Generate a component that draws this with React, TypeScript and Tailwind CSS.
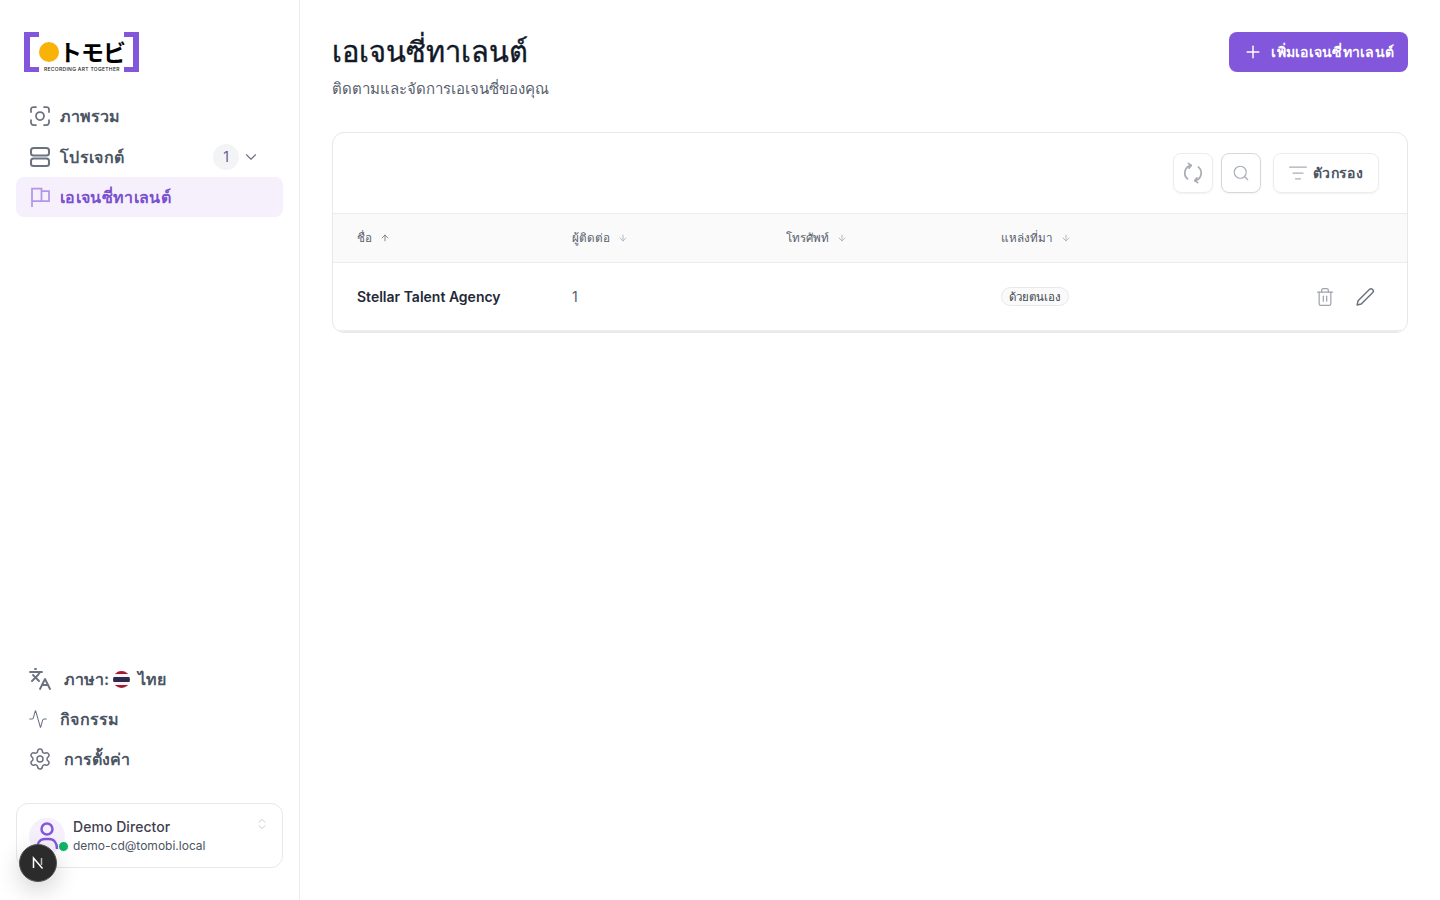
import React from 'react';
import { ArrowDown, ArrowUp, ChevronDown, ChevronsUpDown, Activity, Languages, ListFilter, Plus, Search, Settings, Trash2 } from 'lucide-react';

const NavIcon: React.FC<{ children: React.ReactNode }> = ({ children }) => (
  <span className="w-[24px] h-[24px] flex items-center justify-center text-[#6b7280]">{children}</span>
);

const Logo = () => (
  <div className="relative w-[115px] h-[40px] ml-[8px]">
    <div className="absolute left-0 top-0 w-[15px] h-[40px] border-y-[5px] border-l-[6px] border-[#8257dc]" />
    <div className="absolute right-0 top-0 w-[15px] h-[40px] border-y-[5px] border-r-[6px] border-[#8257dc]" />
    <div className="absolute left-[15px] top-[10px] w-[20px] h-[20px] rounded-full bg-[#f9b208]" />
    <span className="absolute left-[35px] top-[8px] text-[23px] leading-[23px] font-bold text-black tracking-[-1px] font-['Noto_Sans_CJK_JP',sans-serif]">トモビ</span>
    <span className="absolute left-[19px] top-[34px] px-[1px] bg-white text-[5px] leading-[6px] font-medium text-[#222] whitespace-nowrap tracking-[0.3px]">RECORDING ART TOGETHER</span>
  </div>
);

const Sidebar = () => (
  <aside className="w-[300px] h-[900px] shrink-0 border-r border-[#ececec] flex flex-col px-[16px] pt-[32px] pb-[32px]">
    <Logo />
    <nav className="mt-[24px] flex flex-col">
      <div className="h-[40px] flex items-center gap-[8px] px-[12px] text-[#4b5563] font-semibold text-[16px]">
        <NavIcon>
          <svg width="24" height="24" viewBox="0 0 24 24" fill="none" stroke="currentColor" strokeWidth="1.75" strokeLinecap="round">
            <circle cx="12" cy="12" r="4" />
            <path d="M3 8V5.500A2.500 2.500 0 0 1 5.500 3H8" />
            <path d="M16 3h2.500A2.500 2.500 0 0 1 21 5.500V8" />
            <path d="M21 16v2.500a2.500 2.500 0 0 1-2.500 2.500H16" />
            <path d="M8 21H5.500A2.500 2.500 0 0 1 3 18.500V16" />
          </svg>
        </NavIcon>
        <span>ภาพรวม</span>
      </div>
      <div className="h-[41px] flex items-center gap-[8px] px-[12px] text-[#4b5563] font-semibold text-[16px]">
        <NavIcon>
          <svg width="22" height="22" viewBox="0 0 22 22" fill="none" stroke="currentColor" strokeWidth="2">
            <rect x="2" y="2" width="18" height="7.5" rx="2.5" />
            <rect x="2" y="12.5" width="18" height="7.5" rx="2.5" />
          </svg>
        </NavIcon>
        <span className="tracking-[0.35px]">โปรเจกต์</span>
        <span className="ml-auto w-[26px] h-[26px] rounded-full bg-[#f3f4f6] flex items-center justify-center text-[14px] font-normal text-[#6b5b95]">1</span>
        <ChevronDown size={18} strokeWidth={1.5} className="ml-[-5px] mr-[11px] text-[#6b7280]" />
      </div>
      <div className="h-[40px] flex items-center gap-[8px] px-[12px] rounded-[8px] bg-[#f5f0fc] text-[#7a4fd0] font-semibold text-[16px]">
        <NavIcon>
          <svg width="22" height="22" viewBox="0 0 22 22" fill="none" stroke="#b394ea" strokeWidth="1.75">
            <path d="M3 21V2.500h9.500v12.500H3" />
            <path d="M12.500 5h7.500v10h-7.500" />
          </svg>
        </NavIcon>
        <span className="tracking-[0.35px]">เอเจนซี่ทาเลนต์</span>
      </div>
    </nav>
    <div className="mt-auto flex flex-col">
      <div className="h-[40px] flex items-center gap-[12px] px-[12px] text-[#4b5563] font-semibold text-[16px]">
        <NavIcon><Languages size={24} strokeWidth={1.9} /></NavIcon>
        <span className="flex items-center gap-[4px]">
          ภาษา:
          <span className="w-[17px] h-[17px] rounded-full overflow-hidden flex flex-col shrink-0">
            <span className="h-[3px] bg-[#a51931]" />
            <span className="h-[3px] bg-[#f4f5f8]" />
            <span className="h-[5px] bg-[#2d2a4a]" />
            <span className="h-[3px] bg-[#f4f5f8]" />
            <span className="h-[3px] bg-[#a51931]" />
          </span>
          <span className="ml-[4px]">ไทย</span>
        </span>
      </div>
      <div className="h-[40px] flex items-center gap-[8px] px-[12px] text-[#4b5563] font-semibold text-[16px]">
        <NavIcon><Activity size={20} strokeWidth={1.25} className="-translate-x-[2px]" /></NavIcon>
        <span className="tracking-[0.3px]">กิจกรรม</span>
      </div>
      <div className="h-[40px] flex items-center gap-[12px] px-[12px] text-[#4b5563] font-semibold text-[16px]">
        <NavIcon><Settings size={24} strokeWidth={1.5} /></NavIcon>
        <span>การตั้งค่า</span>
      </div>
    </div>
    <div className="relative mt-[24px] h-[65px] rounded-[12px] border border-[#e8e8e8] flex items-start pl-[12px] pt-[14px]">
      <div className="relative w-[36px] h-[36px] rounded-full bg-[#f5f0fc] flex items-center justify-center text-[#8257dc] shrink-0">
        <svg width="28" height="28" viewBox="0 0 28 28" fill="none" stroke="currentColor" strokeWidth="2.5">
          <circle cx="14" cy="7" r="5.5" />
          <path d="M4 27c0-6 3-10 8-10h4c5 0 8 4 8 10" />
        </svg>
        <span className="absolute right-[-4px] bottom-[2px] w-[11px] h-[11px] rounded-full bg-[#10b368] border border-white" />
      </div>
      <div className="ml-[8px] mt-[-1px]">
        <div className="text-[14px] leading-[20px] font-medium text-[#3f3f50] tracking-[0.05px]">Demo Director</div>
        <div className="text-[12px] leading-[18px] text-[#4b5563]">demo-cd@tomobi.local</div>
      </div>
      <ChevronsUpDown size={14} strokeWidth={1} className="absolute right-[13px] top-[13px] text-[#9ca3af]" />
      <div className="absolute left-[2px] top-[40px] w-[38px] h-[38px] rounded-full bg-[#2b2b2b] border border-[#555] shadow-[0_8px_24px_rgba(0,0,0,0.18)] flex items-center justify-center">
        <svg width="16" height="16" viewBox="0 0 16 16" fill="none">
          <path d="M3.500 13V3l9 10.500" stroke="white" strokeWidth="1.500" />
          <path d="M11.500 3v7" stroke="#bbb" strokeWidth="1.500" />
        </svg>
      </div>
    </div>
  </aside>
);

const HeaderCell: React.FC<{ label: string; up?: boolean; className: string }> = ({ label, up, className }) => (
  <div className={`flex items-center gap-[8px] pt-[1px] text-[11.7px] text-[#57606d] ${className}`}>
    <span>{label}</span>
    {up ? <ArrowUp size={10} className="text-[#6b7280]" /> : <ArrowDown size={10} className="text-[#a8adb5]" />}
  </div>
);

export default function App() {
  return (
    <div className="w-[1440px] h-[900px] flex bg-white overflow-hidden font-['Inter','Noto_Sans',sans-serif]">
      <Sidebar />
      <main className="flex-1 px-[32px] pt-[32px]">
        <div className="flex items-start justify-between">
          <div>
            <h1 className="text-[29px] leading-[40px] font-medium text-[#111827] [-webkit-text-stroke:0.4px_#111827]">เอเจนซี่ทาเลนต์</h1>
            <p className="mt-[5px] text-[15px] leading-[24px] text-[#57606d]">ติดตามและจัดการเอเจนซี่ของคุณ</p>
          </div>
          <button className="h-[40px] pl-[14px] pr-[14px] pb-[1px] rounded-[8px] bg-[#8257dc] text-white text-[14px] font-semibold tracking-[0.25px] flex items-center gap-[8px]">
            <Plus size={20} strokeWidth={1.75} />
            เพิ่มเอเจนซี่ทาเลนต์
          </button>
        </div>
        <section className="mt-[31px] rounded-[12px] border border-[#e8e8e8] overflow-hidden">
          <div className="h-[80px] flex items-center justify-end gap-[8px] pr-[28px]">
            <button className="w-[40px] h-[40px] rounded-[8px] border border-[#ececec] shadow-xs flex items-center justify-center text-[#a8adb5]">
              <svg width="22" height="22" viewBox="0 0 24 24" fill="none" stroke="currentColor" strokeWidth="1.9" strokeLinecap="round" strokeLinejoin="round">
                <path d="M10 3.700A8.500 8.500 0 0 0 6 18.500" />
                <path d="M7 1.500l3 2.200-2.300 3" />
                <path d="M14 20.300A8.500 8.500 0 0 0 18 5.500" />
                <path d="M17 22.500l-3-2.200 2.300-3" />
              </svg>
            </button>
            <button className="w-[40px] h-[40px] rounded-[8px] border border-[#d5d7da] shadow-xs flex items-center justify-center text-[#a8adb5]">
              <Search size={18} strokeWidth={1.5} />
            </button>
            <button className="ml-[4px] h-[40px] pl-[14px] pr-[15px] rounded-[8px] border border-[#ececec] shadow-xs flex items-center gap-[5px] text-[14px] font-semibold tracking-[0.35px] text-[#4b5563]">
              <ListFilter size={20} strokeWidth={1.5} className="text-[#a8adb5]" />
              <span className="pb-[1px]">ตัวกรอง</span>
            </button>
          </div>
          <div className="h-[50px] flex items-center bg-[#fafafa] border-y border-[#ececec] px-[24px]">
            <HeaderCell label="ชื่อ" up className="w-[215px]" />
            <HeaderCell label="ผู้ติดต่อ" className="w-[214px]" />
            <HeaderCell label="โทรศัพท์" className="w-[215px]" />
            <HeaderCell label="แหล่งที่มา" className="w-[215px]" />
          </div>
          <div className="h-[69px] flex items-center border-b-2 border-[#ececec] pl-[24px] pr-[32px]">
            <div className="w-[215px] text-[14px] font-semibold text-[#1f2937]">Stellar Talent Agency</div>
            <div className="w-[214px] text-[14px] text-[#57606d]">1</div>
            <div className="w-[215px]" />
            <div className="flex-1 flex items-center">
              <span className="flex items-center h-[19px] px-[7px] pt-[1px] rounded-full border border-[#e8e8e8] bg-[#fafafa] text-[11.5px] leading-[17px] text-[#414651]">ด้วยตนเอง</span>
            </div>
            <div className="flex items-center gap-[20px]">
              <Trash2 size={20} strokeWidth={1.5} className="text-[#a0a5ad]" />
              <svg width="20" height="20" viewBox="0 0 24 24" fill="none" stroke="#6b7280" strokeWidth="1.75" strokeLinejoin="round">
                <path d="M2.500 21.500l1.200-5L17.500 2.800a2.700 2.700 0 0 1 3.800 3.800L7.500 20.300z" />
              </svg>
            </div>
          </div>
        </section>
      </main>
    </div>
  );
}
